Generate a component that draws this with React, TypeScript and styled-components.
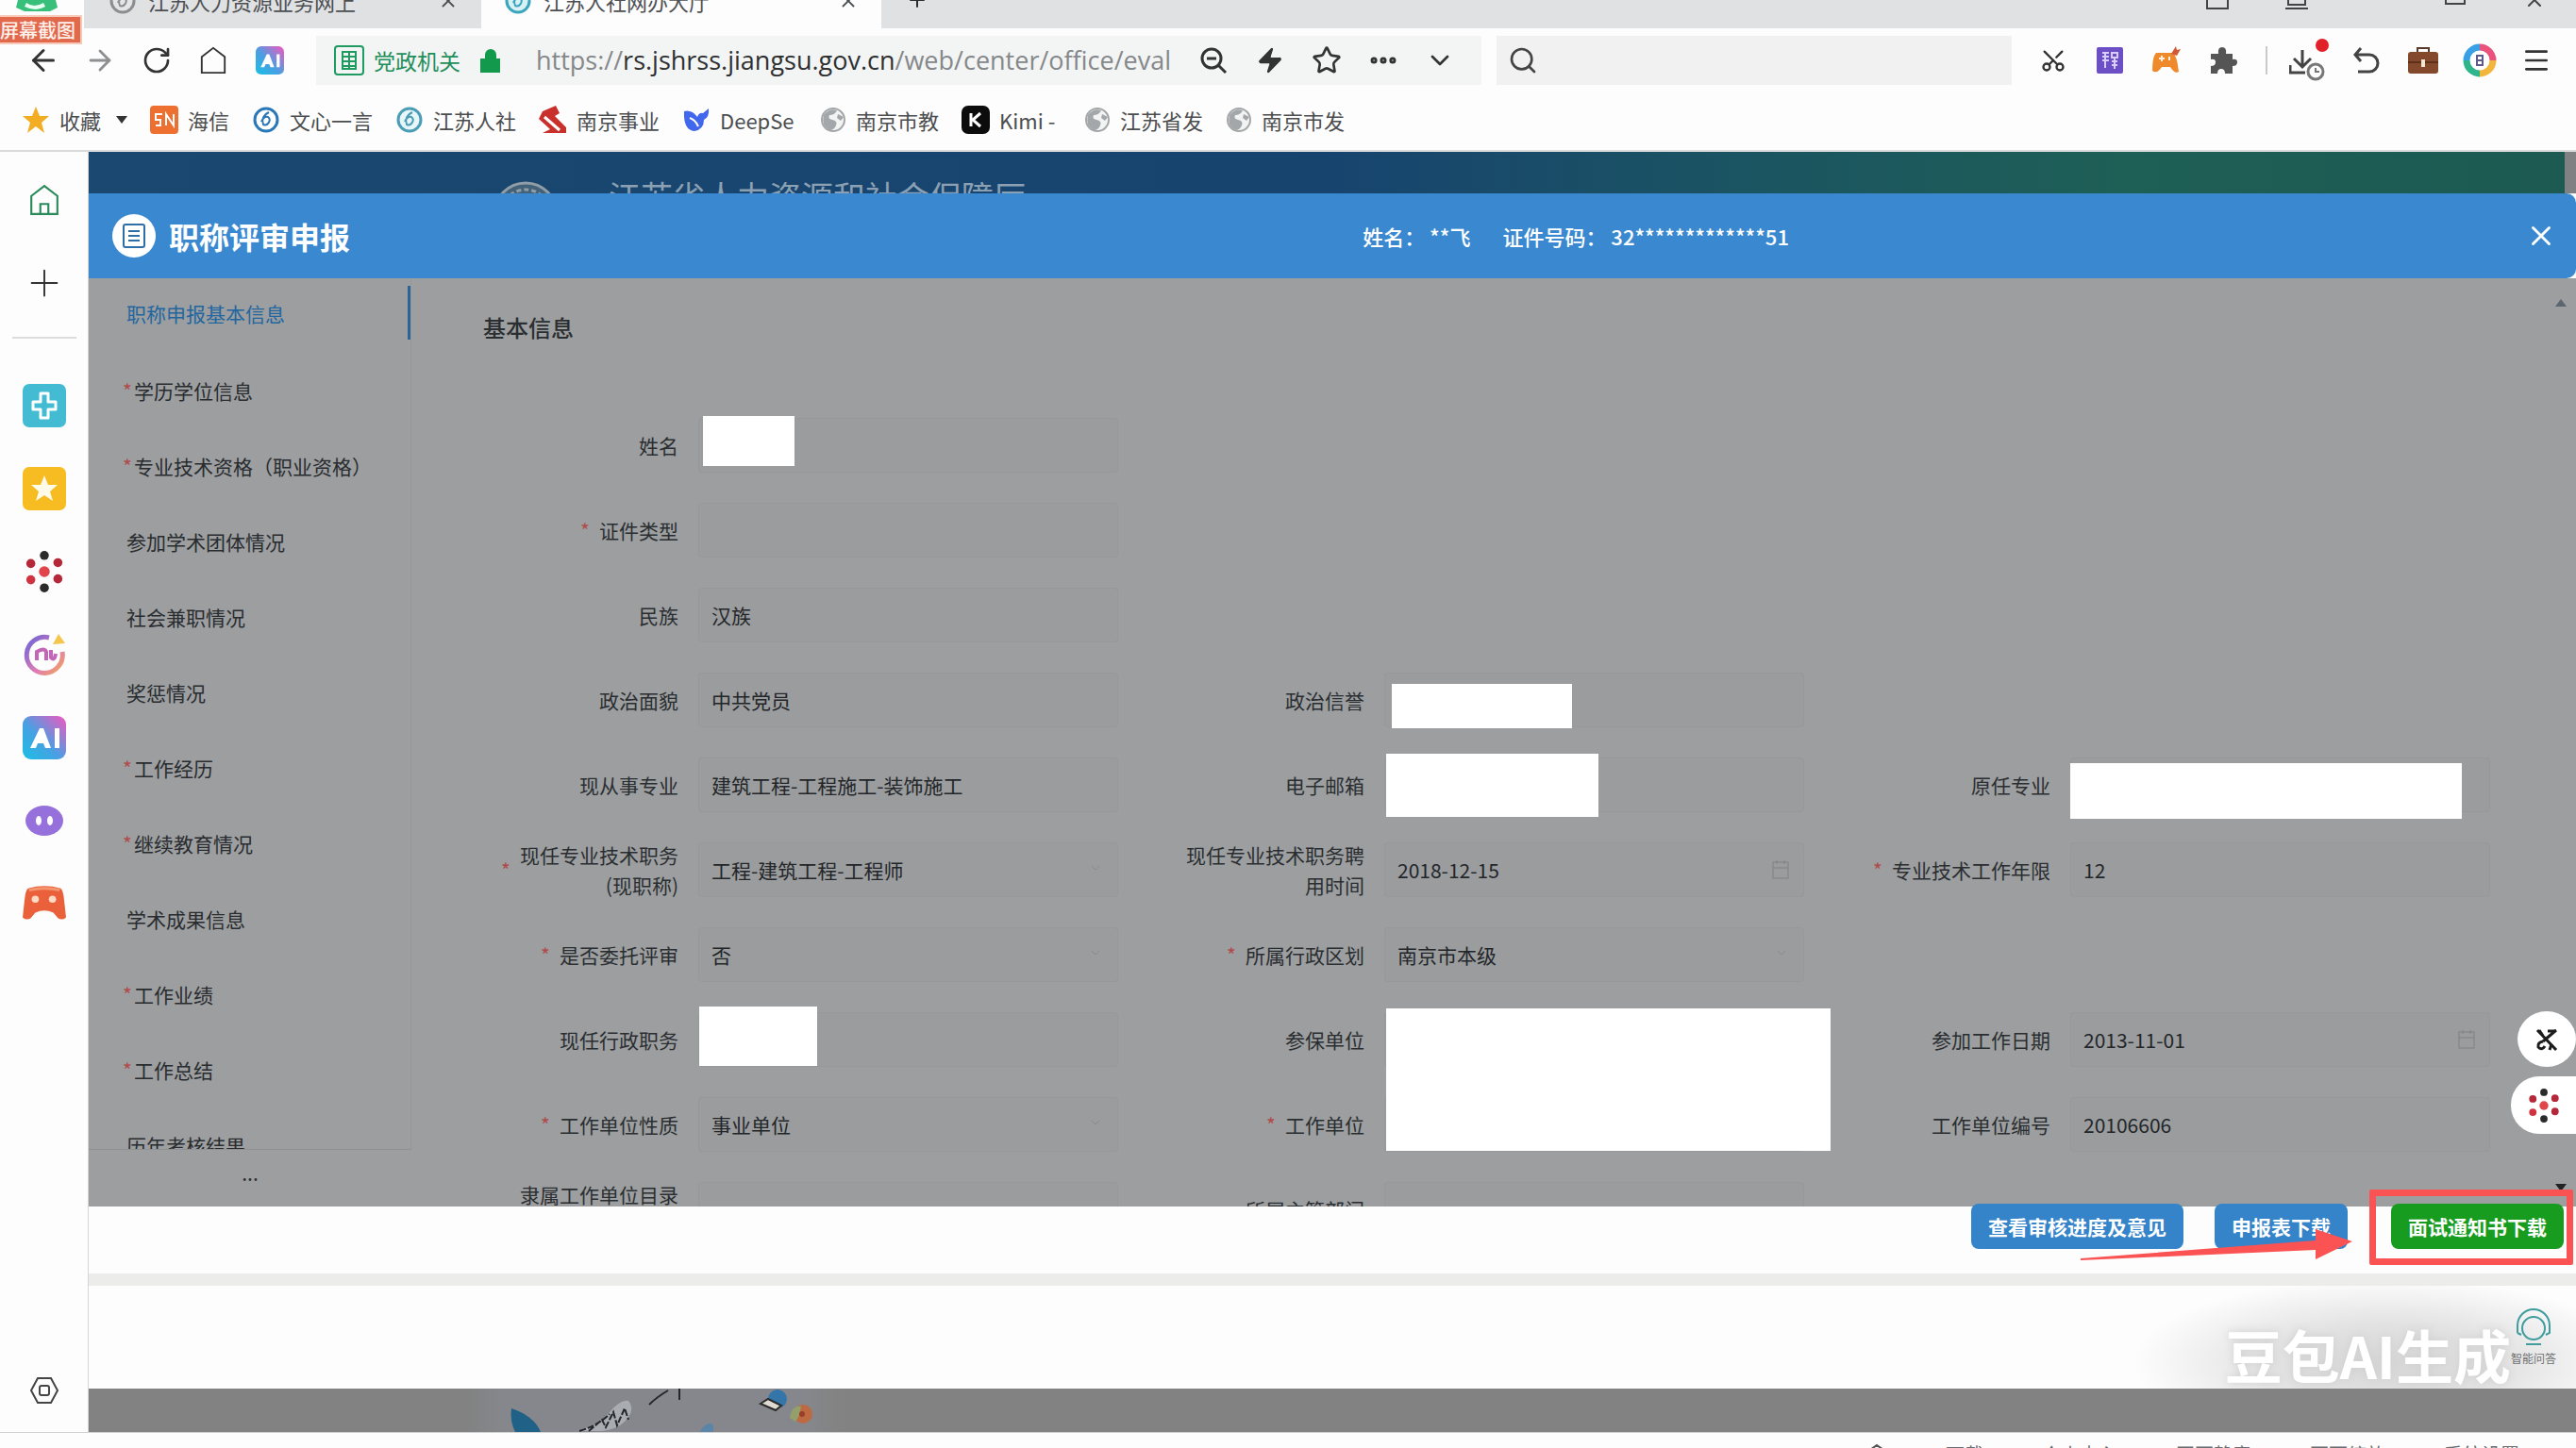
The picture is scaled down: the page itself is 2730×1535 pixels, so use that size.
import React from 'react';
import styled, { createGlobalStyle, css } from 'styled-components';
import {
  ArrowLeft, ArrowRight, RotateCw, Search, Zap, Star, Ellipsis, ChevronDown, Scissors, Menu, X, Plus,
} from 'lucide-react';

const GlobalStyle = createGlobalStyle`
  * { box-sizing: border-box; }
  body {
    margin: 0;
    font-family: "Noto Sans CJK SC", "Open Sans", sans-serif;
    color: #2b2e31;
    background: #fdfdfd;
  }
  button, input, select { font: inherit; color: inherit; }
  button { border: 0; padding: 0; background: none; cursor: pointer; }
  svg { display: block; flex: none; }
`;

/* ---------- browser window ---------- */

const Shell = styled.div`
  display: flex;
  flex-direction: column;
  height: 100vh;
  overflow: hidden;
`;

const TabStrip = styled.div`
  position: relative;
  display: flex;
  align-items: flex-end;
  height: 30px;
  background: #dfe1e3;
  overflow: hidden;
  flex: none;
`;

const BrandCorner = styled.div`
  width: 89px;
  height: 30px;
  background: #fdfdfd;
`;

const Tab = styled.div<{ $active?: boolean; $width: number }>`
  display: flex;
  align-items: center;
  gap: 12px;
  width: ${(p) => p.$width}px;
  height: 58px;
  flex: none;
  padding: 0 24px 0 ${(p) => (p.$active ? 24 : 26)}px;
  font-size: 22px;
  white-space: nowrap;
  color: #4c4f52;
  background: ${(p) => (p.$active ? '#fdfdfd' : 'transparent')};
  button { margin-left: auto; }
`;

const NewTab = styled.button`
  height: 60px;
  margin-left: 26px;
`;

const WindowControls = styled.div`
  display: flex;
  align-items: center;
  gap: 60px;
  height: 60px;
  margin-left: auto;
  padding-right: 32px;
`;

const CornerLogo = styled.div`
  position: absolute;
  left: 14px;
  top: 0;
  z-index: 2;
`;

const CornerLabel = styled.div`
  position: absolute;
  left: 0;
  top: 16px;
  z-index: 3;
  width: 87px;
  height: 31px;
  line-height: 28px;
  border: 2px solid #f6c9b8;
  border-left: 0;
  font-size: 20px;
  font-weight: 500;
  white-space: nowrap;
  color: #fdf1ec;
  background: #e2694c;
`;

const Toolbar = styled.div`
  display: flex;
  align-items: center;
  height: 68px;
  padding: 0 12px 0 16px;
  background: #fdfdfd;
  flex: none;
`;

const ToolButton = styled.button`
  display: flex;
  align-items: center;
  justify-content: center;
  width: 60px;
  height: 52px;
  flex: none;
  color: #333;
`;

const AddressBar = styled.div`
  display: flex;
  align-items: center;
  flex: 1233 1 0;
  height: 52px;
  min-width: 0;
  margin-left: 19px;
  padding: 0 14px 0 19px;
  background: #f3f4f4;
`;

const SiteBadge = styled.span`
  display: flex;
  align-items: center;
  gap: 10px;
  font-size: 23px;
  color: #1f8f5b;
  white-space: nowrap;
  svg:last-child { margin-left: 10px; }
`;

const Url = styled.div`
  flex: 1;
  min-width: 0;
  overflow: hidden;
  margin-left: 36px;
  font-family: "Open Sans", sans-serif;
  font-size: 27px;
  line-height: 40px;
  white-space: nowrap;
  color: #85888a;
  b { font-weight: 400; color: #2e3032; }
`;

const SearchBar = styled.label`
  display: flex;
  align-items: center;
  flex: 548 1 0;
  height: 52px;
  min-width: 0;
  margin: 0 14px 0 16px;
  padding-left: 12px;
  background: #f1f1f1;
  input { flex: 1; min-width: 0; border: 0; background: none; outline: 0; }
`;

const Separator = styled.span`
  width: 2px;
  height: 30px;
  margin: 0 15px;
  background: #c9c9c9;
`;

const Bookmarks = styled.nav`
  display: flex;
  align-items: center;
  gap: 24px;
  height: 63px;
  padding: 0 0 3px 23px;
  border-bottom: 2px solid #d9dadb;
  background: #fdfdfd;
  flex: none;
`;

const Bookmark = styled.a<{ $text?: number }>`
  display: flex;
  align-items: center;
  gap: 10px;
  font-size: 22px;
  line-height: 32px;
  color: #4b4d4f;
  text-decoration: none;
  span {
    min-width: ${(p) => (p.$text ? `${p.$text}px` : 'auto')};
    white-space: nowrap;
  }
`;

const Window = styled.div`
  display: flex;
  flex: 1;
  min-height: 0;
`;

const Rail = styled.aside`
  display: flex;
  flex-direction: column;
  align-items: center;
  width: 94px;
  padding-top: 7px;
  border-right: 1px solid #d5d6d7;
  background: #fdfdfd;
  flex: none;
  hr {
    width: 68px;
    height: 2px;
    margin: 13px 0 27px;
    border: 0;
    background: #dcdcdc;
    flex: none;
  }
`;

const RailButton = styled.button<{ $last?: boolean }>`
  display: flex;
  align-items: center;
  justify-content: center;
  width: 100%;
  height: 88px;
  ${(p) => p.$last && css`margin-top: auto;`}
`;

const StatusBar = styled.footer`
  display: flex;
  justify-content: flex-end;
  gap: 62px;
  height: 17px;
  padding: 12px 60px 0 0;
  overflow: hidden;
  font-size: 20px;
  line-height: 22px;
  color: #6b6e70;
  border-top: 1px solid #cfd0d0;
  background: #fdfdfd;
  flex: none;
`;

/* ---------- page ---------- */

const Page = styled.main`
  position: relative;
  display: flex;
  flex-direction: column;
  flex: 1;
  min-width: 0;
`;

const Banner = styled.div`
  display: flex;
  align-items: flex-start;
  gap: 53px;
  height: 44px;
  padding: 28px 0 0 428px;
  overflow: hidden;
  border-right: 12px solid #7f8182;
  background: linear-gradient(90deg, #1a4870 0%, #17446f 50%, #1b5561 68%, #1e5f56 82%, #1c5a52 100%);
  flex: none;
`;

const BannerTitle = styled.div`
  font-family: "Liberation Serif", "Noto Sans CJK SC", serif;
  font-size: 34px;
  line-height: 44px;
  white-space: nowrap;
  color: #8ba0b3;
`;

const DialogHeader = styled.header`
  display: grid;
  grid-template-columns: 21fr 20fr;
  align-items: center;
  height: 90px;
  color: #fff;
  background: #3a89d0;
  border-radius: 0 10px 10px 0;
  flex: none;
`;

const DialogTitle = styled.h1`
  display: flex;
  align-items: center;
  gap: 14px;
  margin: 0;
  padding-left: 25px;
  font-size: 32px;
  line-height: 44px;
  font-weight: 700;
`;

const Applicant = styled.div`
  display: flex;
  align-items: center;
  gap: 34px;
  padding-right: 20px;
  font-size: 22px;
  font-weight: 500;
  button { margin-left: auto; color: #fff; }
`;

const DialogBody = styled.div`
  position: relative;
  display: flex;
  flex: 1;
  min-height: 0;
  background: #9c9ea0;
`;

const SideNav = styled.nav`
  display: flex;
  flex-direction: column;
  width: 342px;
  flex: none;
`;

const NavList = styled.ul`
  flex: 1;
  min-height: 0;
  margin: 0;
  padding: 8px 0 0;
  overflow: hidden;
  list-style: none;
  border-right: 1px solid #96989a;
  border-bottom: 1px solid #8f9193;
`;

const NavItem = styled.li<{ $current?: boolean }>`
  display: flex;
  align-items: center;
  height: ${(p) => (p.$current ? 57 : 80)}px;
  margin-bottom: ${(p) => (p.$current ? 14 : 0)}px;
  border-right: ${(p) => (p.$current ? '3px solid #2b6496' : '0')};
  color: ${(p) => (p.$current ? '#23669f' : '#292c2f')};
  font-size: 21px;
  a { display: flex; color: inherit; text-decoration: none; white-space: nowrap; }
`;

const Mark = styled.i<{ $nav?: boolean }>`
  width: ${(p) => (p.$nav ? 12 : 20)}px;
  font-style: normal;
  text-align: left;
  color: #b04a4a;
`;

const NavLabel = styled.a<{ $required?: boolean }>`
  padding-left: ${(p) => (p.$required ? 36 : 40)}px;
`;

const NavMore = styled.button`
  height: 60px;
  padding-bottom: 12px;
  font-size: 21px;
`;

const FormPane = styled.form`
  flex: 1;
  min-width: 0;
  overflow: hidden;
  padding: 34px 5px 0 76px;
`;

const SectionTitle = styled.h2`
  margin: 0 0 62px;
  font-size: 24px;
  line-height: 36px;
  font-weight: 500;
`;

const FormRow = styled.div`
  display: grid;
  grid-template-columns: repeat(3, 1fr);
  height: 90px;
`;

const Field = styled.div`
  display: flex;
  align-items: center;
  gap: 21px;
  padding-right: 54px;
`;

const FieldLabel = styled.label`
  display: flex;
  align-items: center;
  justify-content: flex-end;
  width: 207px;
  flex: none;
  font-size: 21px;
  line-height: 32px;
  text-align: right;
  white-space: pre;
`;

const Control = styled.div`
  position: relative;
  flex: 1;
  min-width: 0;
  height: 58px;
`;

const boxStyle = css`
  display: block;
  width: 100%;
  height: 100%;
  padding: 0 13px;
  border: 1px solid #96989a;
  border-radius: 4px;
  outline: 0;
  font-size: 21px;
  color: #232629;
  background: #9a9c9e;
  opacity: 1;
`;

const TextBox = styled.input`${boxStyle}`;

const SelectBox = styled.select`
  ${boxStyle}
  appearance: none;
`;

const ControlIcon = styled.span`
  position: absolute;
  right: 16px;
  top: 19px;
  color: #7f8284;
`;

const Cover = styled.span<{ $x: number; $y: number; $w: number; $h: number }>`
  position: absolute;
  z-index: 1;
  left: ${(p) => p.$x}px;
  top: ${(p) => p.$y}px;
  width: ${(p) => p.$w}px;
  height: ${(p) => p.$h}px;
  background: #fff;
`;

const ScrollTrack = styled.div`
  display: flex;
  flex-direction: column;
  justify-content: space-between;
  align-items: center;
  width: 32px;
  padding: 22px 0 16px;
  flex: none;
`;

const FloatingTools = styled.div`
  position: absolute;
  right: 0;
  bottom: 77px;
  z-index: 2;
  display: flex;
  flex-direction: column;
  align-items: flex-end;
  gap: 10px;
`;

const FloatButton = styled.button<{ $pill?: boolean }>`
  display: flex;
  align-items: center;
  justify-content: center;
  width: ${(p) => (p.$pill ? 69 : 62)}px;
  height: ${(p) => (p.$pill ? 61 : 59)}px;
  border-radius: ${(p) => (p.$pill ? '30px 0 0 30px' : '50%')};
  background: #fff;
`;

const Actions = styled.div`
  position: relative;
  z-index: 3;
  display: flex;
  justify-content: flex-end;
  align-items: flex-start;
  gap: 33px;
  height: 71px;
  padding-right: 13px;
  background: #fdfdfd;
  flex: none;
`;

const ActionButton = styled.button<{ $green?: boolean }>`
  height: 48px;
  margin-top: -3px;
  padding: 0 18px;
  border-radius: 8px;
  font-size: 21px;
  font-weight: 700;
  white-space: nowrap;
  color: #fff;
  background: ${(p) => (p.$green ? '#189c20' : '#3583c8')};
`;

const Highlighted = styled.div`
  position: relative;
  margin-left: 13px;
  &::after {
    content: '';
    position: absolute;
    inset: -18px -10px -17px -23px;
    border: 7px solid #fb5353;
    border-radius: 2px;
    pointer-events: none;
  }
`;

const Pointer = styled.svg`
  position: absolute;
  right: 237px;
  top: 24px;
  pointer-events: none;
`;

const Divider = styled.div`
  height: 13px;
  background: #ececea;
  flex: none;
`;

const LowerPanel = styled.div`
  display: flex;
  justify-content: flex-end;
  align-items: flex-end;
  height: 109px;
  padding-right: 21px;
  background: radial-gradient(ellipse 270px 90px at calc(100% - 200px) 75%, #d6d6d6 0%, #e2e2e2 45%, #fdfdfd 100%);
  flex: none;
`;

const Watermark = styled.div`
  font-size: 61px;
  line-height: 72px;
  font-weight: 700;
  white-space: nowrap;
  color: #fff;
  text-shadow: 0 0 10px #cfcfcf;
`;

const Helper = styled.button`
  display: flex;
  flex-direction: column;
  align-items: center;
  align-self: flex-start;
  gap: 4px;
  padding-top: 24px;
  font-size: 12px;
  line-height: 18px;
  color: #6d7072;
`;

const Backdrop = styled.div`
  height: 46px;
  padding-left: 400px;
  overflow: hidden;
  background: linear-gradient(90deg, #828282 0, #828282 400px, #86878c 440px, #86878c 760px, #828282 800px);
  flex: none;
`;

/* ---------- drawings ---------- */

const AiTile = ({ size }: { size: number }) => (
  <svg width={size} height={size} viewBox="0 0 46 46">
    <defs>
      <linearGradient id={`ai${size}`} x1="0" y1="1" x2="1" y2="0">
        <stop offset="0" stopColor="#18c0e4" />
        <stop offset=".45" stopColor="#4a9fe2" />
        <stop offset="1" stopColor="#f457c0" />
      </linearGradient>
    </defs>
    <rect width="46" height="46" rx="9" fill={`url(#ai${size})`} />
    <path d="M8 34 18 13h4l8 21h-6l-2-5h-6l-2 5zM34 13h5v21h-5z" fill="#fff" />
  </svg>
);

const HomeIcon = ({ color, size }: { color: string; size: number }) => (
  <svg width={size} height={size} viewBox="0 0 32 32" fill="none" stroke={color} strokeWidth="2">
    <path d="M3 12 16 2l13 10v18H3z" />
    {size > 30 && <path d="M12 30V20h8v10" />}
  </svg>
);

const Globe = () => (
  <svg width="28" height="28" viewBox="0 0 28 28">
    <circle cx="14" cy="14" r="12" fill="#f2f3f3" stroke="#a4a7a9" strokeWidth="2" />
    <path d="M4 9q6-8 14-5-2 5-8 5-2 4 3 5 6 1 4 6-2 5-7 5Q1 20 4 9z" fill="#a4a7a9" />
    <path d="m19 8 6 3-3 4-4-3z" fill="#a4a7a9" />
  </svg>
);

const Swirl = ({ color, fill }: { color: string; fill: string }) => (
  <svg width="30" height="30" viewBox="0 0 30 30" fill="none" stroke={color} strokeWidth="3">
    <circle cx="15" cy="15" r="12" fill={fill} />
    <path d="M18 7c-6 3-8 8-6 13 5 2 9-5 5-8-3-1-6 2-7 5" strokeWidth="2" />
  </svg>
);

const Dots = ({ size }: { size: number }) => (
  <svg width={size} height={size} viewBox="0 0 46 46">
    <circle cx="23" cy="5" r="5" fill="#2b2b2b" />
    <circle cx="23" cy="41" r="5" fill="#2b2b2b" />
    <circle cx="8" cy="14" r="5" fill="#b5283a" />
    <circle cx="38" cy="13" r="5" fill="#b5283a" />
    <circle cx="8" cy="32" r="5" fill="#cf3340" />
    <circle cx="38" cy="31" r="5" fill="#b5283a" />
    <circle cx="23" cy="23" r="6" fill="#e2444b" />
  </svg>
);

const Pad = ({ color, size }: { color: string; size: number }) => (
  <svg width={size} height={size} viewBox="0 0 48 48">
    <path d="M6 7q18-5 36 0 3 2 4 14l2 18q-4 4-9 1l-5-6q-10-5-20 0l-5 6q-5 3-9-1l2-18Q3 9 6 7z" fill={color} />
    <path d="M7 9q17-4 34 0" stroke="#f4956f" strokeWidth="3" fill="none" />
    <circle cx="14" cy="19" r="4" fill="#ffd9c4" />
    <circle cx="33" cy="19" r="4" fill="#ffd9c4" />
  </svg>
);

const CalendarIcon = () => (
  <svg width="18" height="20" viewBox="0 0 18 20" fill="none" stroke="currentColor" strokeWidth="1">
    <rect x="1" y="2" width="16" height="17" />
    <path d="M1 8h16M5 0v4M13 0v4" />
  </svg>
);

/* ---------- data ---------- */

const navItems: { text: string; required?: boolean }[] = [
  { text: '职称申报基本信息' },
  { text: '学历学位信息', required: true },
  { text: '专业技术资格（职业资格）', required: true },
  { text: '参加学术团体情况' },
  { text: '社会兼职情况' },
  { text: '奖惩情况' },
  { text: '工作经历', required: true },
  { text: '继续教育情况', required: true },
  { text: '学术成果信息' },
  { text: '工作业绩', required: true },
  { text: '工作总结', required: true },
  { text: '历年考核结果' },
];

type FieldData = {
  label: string;
  required?: boolean;
  value?: string;
  kind?: 'select' | 'date';
  cover?: [number, number, number, number];
};

const rows: (FieldData | null)[][] = [
  [{ label: '姓名', cover: [5, -2, 97, 53] }],
  [{ label: '证件类型', required: true }],
  [{ label: '民族', value: '汉族' }],
  [{ label: '政治面貌', value: '中共党员' }, { label: '政治信誉', cover: [8, 12, 191, 47] }],
  [
    { label: '现从事专业', value: '建筑工程-工程施工-装饰施工' },
    { label: '电子邮箱', cover: [2, -4, 225, 67] },
    { label: '原任专业', cover: [0, 6, 415, 59] },
  ],
  [
    { label: '现任专业技术职务\n(现职称)', required: true, value: '工程-建筑工程-工程师', kind: 'select' },
    { label: '现任专业技术职务聘\n用时间', value: '2018-12-15', kind: 'date' },
    { label: '专业技术工作年限', required: true, value: '12' },
  ],
  [
    { label: '是否委托评审', required: true, value: '否', kind: 'select' },
    { label: '所属行政区划', required: true, value: '南京市本级', kind: 'select' },
  ],
  [
    { label: '现任行政职务', cover: [1, -6, 125, 63] },
    { label: '参保单位', cover: [2, -4, 471, 151] },
    { label: '参加工作日期', value: '2013-11-01', kind: 'date' },
  ],
  [
    { label: '工作单位性质', required: true, value: '事业单位', kind: 'select' },
    { label: '工作单位', required: true },
    { label: '工作单位编号', value: '20106606' },
  ],
  [{ label: '隶属工作单位目录\n名称' }, { label: '所属主管部门' }],
];

const FormField = ({ data, id }: { data: FieldData; id: string }) => (
  <Field>
    <FieldLabel htmlFor={id}>
      {data.required && <Mark>*</Mark>}
      <span>{data.label}</span>
    </FieldLabel>
    <Control>
      {data.kind === 'select' ? (
        <SelectBox id={id} defaultValue={data.value}>
          <option>{data.value}</option>
        </SelectBox>
      ) : (
        <TextBox id={id} readOnly defaultValue={data.value ?? ''} />
      )}
      {data.kind === 'date' && <ControlIcon><CalendarIcon /></ControlIcon>}
      {data.kind === 'select' && <ControlIcon><ChevronDown size={16} strokeWidth={1} /></ControlIcon>}
      {data.cover && <Cover $x={data.cover[0]} $y={data.cover[1]} $w={data.cover[2]} $h={data.cover[3]} />}
    </Control>
  </Field>
);

export default function App() {
  return (
    <>
      <GlobalStyle />
      <Shell>
        <TabStrip>
          <BrandCorner />
          <Tab $width={421}>
            <Swirl color="#8b8e90" fill="#e4e5e6" />
            <span>江苏人力资源业务网上</span>
            <button aria-label="关闭标签页"><X size={22} strokeWidth={2} /></button>
          </Tab>
          <Tab $active $width={424}>
            <Swirl color="#3aa6bd" fill="#d9f1f5" />
            <span>江苏人社网办大厅</span>
            <button aria-label="关闭标签页"><X size={22} strokeWidth={2} /></button>
          </Tab>
          <NewTab aria-label="新标签页"><Plus size={24} strokeWidth={2} /></NewTab>
          <WindowControls>
            <svg width="24" height="24" viewBox="0 0 24 24" fill="none" stroke="#444" strokeWidth="2"><path d="M1 1h22v20H1z" /></svg>
            <svg width="24" height="24" viewBox="0 0 24 24" fill="none" stroke="#444" strokeWidth="2"><path d="M3 1h18v16H3zM0 21h24" /></svg>
            <svg width="24" height="24" viewBox="0 0 24 24" fill="none" stroke="#444" strokeWidth="2"><path d="M0 10h24" /></svg>
            <svg width="24" height="24" viewBox="0 0 24 24" fill="none" stroke="#444" strokeWidth="2"><path d="M2 2h20v14H2z" /></svg>
            <X size={24} color="#444" />
          </WindowControls>
        </TabStrip>
        <CornerLogo>
          <svg width="50" height="14" viewBox="0 0 50 14">
            <path d="M5 0h40l2 8-8 4H12L3 8z" fill="#38c07a" />
            <path d="M14 3q8 6 18 0l2 4q-10 6-22 0z" fill="#e9fff2" />
          </svg>
        </CornerLogo>
        <CornerLabel>屏幕截图</CornerLabel>

        <Toolbar>
          <ToolButton aria-label="后退"><ArrowLeft size={36} strokeWidth={2} /></ToolButton>
          <ToolButton aria-label="前进"><ArrowRight size={34} strokeWidth={2} color="#8d8f91" /></ToolButton>
          <ToolButton aria-label="刷新"><RotateCw size={32} strokeWidth={2} /></ToolButton>
          <ToolButton aria-label="主页"><HomeIcon color="#333" size={30} /></ToolButton>
          <ToolButton aria-label="AI 助手"><AiTile size={30} /></ToolButton>
          <AddressBar>
            <SiteBadge>
              <svg width="32" height="32" viewBox="0 0 32 32" fill="none" stroke="#1f9a60" strokeWidth="2">
                <rect x="1" y="1" width="30" height="30" rx="3" />
                <path d="M9 7h14v18H9zM9 12h14M9 17h14M9 22h14M16 7v18" />
              </svg>
              党政机关
              <svg width="24" height="28" viewBox="0 0 24 28">
                <path d="M1 12h21v15H1zM6 12V8a6 6 0 0 1 12 0v4" fill="#12994b" />
              </svg>
            </SiteBadge>
            <Url>https://<b>rs.jshrss.jiangsu.gov.cn</b>/web/center/office/eval</Url>
            <ToolButton aria-label="缩小">
              <svg width="32" height="32" viewBox="0 0 32 32" fill="none" stroke="#333" strokeWidth="3">
                <circle cx="14" cy="14" r="10" /><path d="m21 21 8 8M9 14h10" />
              </svg>
            </ToolButton>
            <ToolButton aria-label="极速模式"><Zap size={30} fill="#333" strokeWidth={1} /></ToolButton>
            <ToolButton aria-label="收藏"><Star size={32} strokeWidth={2} /></ToolButton>
            <ToolButton aria-label="更多"><Ellipsis size={34} strokeWidth={3} /></ToolButton>
            <ToolButton aria-label="展开"><ChevronDown size={32} strokeWidth={2} /></ToolButton>
          </AddressBar>
          <SearchBar>
            <Search size={32} strokeWidth={2} color="#444" />
            <input aria-label="搜索" />
          </SearchBar>
          <ToolButton aria-label="截图"><Scissors size={28} strokeWidth={2} style={{ rotate: '-90deg' }} /></ToolButton>
          <ToolButton aria-label="翻译">
            <svg width="28" height="28" viewBox="0 0 28 28">
              <rect width="28" height="28" rx="2" fill="#6c4fc4" />
              <path d="M6 6h7M6 10h7M6 14h7M9 6v16M16 6h6v5h-6zM16 15h6M16 19h6M19 12v11" stroke="#d8cdf8" strokeWidth="2" fill="none" />
            </svg>
          </ToolButton>
          <ToolButton aria-label="游戏">
            <svg width="34" height="32" viewBox="0 0 34 32">
              <path d="M6 8h18q4 3 6 20-4 3-9-5h-9q-5 8-10 4Q2 12 6 8z" fill="#ee8a2c" />
              <path d="m22 9 5-8 1 4 4-1-4 7z" fill="#d05a34" />
              <path d="M9 14h6M12 11v6M20 12v4" stroke="#fff0dd" strokeWidth="2" />
            </svg>
          </ToolButton>
          <ToolButton aria-label="扩展">
            <svg width="32" height="30" viewBox="0 0 32 30">
              <path d="M3 8h8q-1-7 4-7t4 7h7v6q5-1 5 3t-5 4v8h-8q0-5-4-5t-4 5H3v-8q5 0 5-4t-5-3z" fill="#555" />
            </svg>
          </ToolButton>
          <Separator />
          <ToolButton aria-label="下载">
            <svg width="44" height="46" viewBox="0 0 44 46" fill="none" stroke="#444" strokeWidth="3">
              <path d="M14 12v18M5 21l9 9 9-9M1 28v8h16" />
              <circle cx="28" cy="35" r="8" stroke="#777" /><path d="M28 31v4h4" stroke="#777" strokeWidth="2" />
              <circle cx="35" cy="7" r="7" fill="#e02228" stroke="none" />
            </svg>
          </ToolButton>
          <ToolButton aria-label="恢复">
            <svg width="30" height="30" viewBox="0 0 30 30" fill="none" stroke="#444" strokeWidth="3">
              <path d="M9 2 3 9l6 7M3 9h15a9 9 0 0 1 0 18H6" />
            </svg>
          </ToolButton>
          <ToolButton aria-label="工具箱">
            <svg width="34" height="30" viewBox="0 0 34 30">
              <path d="M11 7V2h12v5" fill="none" stroke="#5a3a29" strokeWidth="2" />
              <rect x="1" y="6" width="32" height="23" rx="3" fill="#84492c" />
              <path d="M1 17h32" stroke="#5d301c" strokeWidth="2" /><rect x="15" y="14" width="4" height="8" fill="#f3e3cf" />
            </svg>
          </ToolButton>
          <ToolButton aria-label="账号">
            <svg width="36" height="36" viewBox="0 0 36 36" fill="none" strokeWidth="7">
              <path d="M18 4a14 14 0 0 1 14 14" stroke="#e8527c" />
              <path d="M32 18a14 14 0 0 1-14 14" stroke="#f2b63c" />
              <path d="M18 32A14 14 0 0 1 4 18" stroke="#2fb58a" />
              <path d="M4 18A14 14 0 0 1 18 4" stroke="#3aa0e6" />
              <circle cx="18" cy="18" r="10" fill="#fff" stroke="none" />
              <path d="M14 13h8M14 18h8M14 23h8M15 13v10M21 13v10" stroke="#5c5a8c" strokeWidth="2" />
            </svg>
          </ToolButton>
          <ToolButton aria-label="菜单"><Menu size={32} strokeWidth={2} /></ToolButton>
        </Toolbar>

        <Bookmarks>
          <Bookmark href="#">
            <svg width="30" height="30" viewBox="0 0 30 30"><path d="m15 1 4 10h10l-8 7 3 11-9-7-9 7 3-11-8-7h10z" fill="#f3ad22" /></svg>
            <span>收藏</span>
            <svg width="18" height="10" viewBox="0 0 18 10"><path d="M6 1h12l-6 8z" fill="#333" /></svg>
          </Bookmark>
          <Bookmark href="#">
            <svg width="30" height="30" viewBox="0 0 30 30"><rect width="30" height="30" rx="4" fill="#ee7030" /><path d="M13 9H6v6h5v6H6M17 21V9l8 12V9" stroke="#fff" strokeWidth="2" fill="none" /></svg>
            <span>海信</span>
          </Bookmark>
          <Bookmark href="#"><Swirl color="#2a78b8" fill="#fff" /><span>文心一言</span></Bookmark>
          <Bookmark href="#"><Swirl color="#4a9db4" fill="#e6f6fa" /><span>江苏人社</span></Bookmark>
          <Bookmark href="#">
            <svg width="30" height="30" viewBox="0 0 30 30"><path d="M4 6 18 0l4 8-5 3 12 12v6H4l8-4L0 14z" fill="#c9302c" /><path d="m6 12 16 14" stroke="#fff" strokeWidth="3" /></svg>
            <span>南京事业</span>
          </Bookmark>
          <Bookmark href="#" $text={82}>
            <svg width="30" height="30" viewBox="0 0 30 30"><path d="M2 6q8-2 14 6 2-5 6-4l6-5q1 9-5 12 0 10-10 12Q1 26 2 6z" fill="#4167ec" /><path d="M8 13q6 2 9 9" stroke="#fff" strokeWidth="2" fill="none" /></svg>
            <span>DeepSe</span>
          </Bookmark>
          <Bookmark href="#"><Globe /><span>南京市教</span></Bookmark>
          <Bookmark href="#" $text={66}>
            <svg width="30" height="30" viewBox="0 0 30 30"><rect width="30" height="30" rx="7" fill="#0c0c0c" /><path d="M10 8v14M20 8l-8 7 8 7" stroke="#fff" strokeWidth="3" fill="none" /></svg>
            <span>Kimi -</span>
          </Bookmark>
          <Bookmark href="#"><Globe /><span>江苏省发</span></Bookmark>
          <Bookmark href="#"><Globe /><span>南京市发</span></Bookmark>
        </Bookmarks>

        <Window>
          <Rail>
            <RailButton aria-label="主页"><HomeIcon color="#2a8a5a" size={34} /></RailButton>
            <RailButton aria-label="添加"><Plus size={46} strokeWidth={1} color="#333" /></RailButton>
            <hr />
            <RailButton aria-label="健康">
              <svg width="46" height="46" viewBox="0 0 46 46"><rect width="46" height="46" rx="7" fill="#43bcd3" /><path d="M19 10h8v9h8v8h-8v9h-8v-9h-8v-8h8z" fill="none" stroke="#fff" strokeWidth="3" strokeLinejoin="round" /></svg>
            </RailButton>
            <RailButton aria-label="收藏">
              <svg width="46" height="46" viewBox="0 0 46 46"><rect width="46" height="46" rx="7" fill="#f6bc21" /><path d="m23 9 4 10h10l-8 7 3 10-9-6-9 6 3-10-8-7h10z" fill="#fffbe9" /></svg>
            </RailButton>
            <RailButton aria-label="应用"><Dots size={44} /></RailButton>
            <RailButton aria-label="创作">
              <svg width="46" height="46" viewBox="0 0 46 46" fill="none">
                <path d="M28 5A19 19 0 1 0 42 20" stroke="url(#ring)" strokeWidth="5" />
                <defs><linearGradient id="ring" x1="0" y1="0" x2="1" y2="1"><stop offset="0" stopColor="#6a63d8" /><stop offset=".6" stopColor="#e07bb5" /><stop offset="1" stopColor="#f2a65a" /></linearGradient></defs>
                <path d="m32 12 6-11 7 10z" fill="#f5c54c" />
                <path d="M15 29V20q8-5 10 0v9M30 18v8q4 4 5-4" stroke="#c466b8" strokeWidth="4" />
              </svg>
            </RailButton>
            <RailButton aria-label="AI"><AiTile size={46} /></RailButton>
            <RailButton aria-label="机器人">
              <svg width="42" height="36" viewBox="0 0 42 36"><ellipse cx="21" cy="18" rx="20" ry="16" fill="#9671dc" /><ellipse cx="15" cy="18" rx="3" ry="5" fill="#fff" /><ellipse cx="27" cy="18" rx="3" ry="5" fill="#fff" /></svg>
            </RailButton>
            <RailButton aria-label="游戏"><Pad color="#e9603a" size={46} /></RailButton>
            <RailButton aria-label="设置" $last>
              <svg width="32" height="30" viewBox="0 0 32 30" fill="none" stroke="#444" strokeWidth="2"><path d="M9 2h14l7 13-7 13H9L2 15z" /><rect x="11" y="10" width="10" height="10" rx="2" /></svg>
            </RailButton>
          </Rail>

          <Page>
            <Banner>
              <svg width="70" height="70" viewBox="0 0 70 70" fill="none" stroke="#8f9da6" strokeWidth="3"><circle cx="35" cy="38" r="33" fill="#44617a" /><circle cx="35" cy="38" r="26" strokeDasharray="5 3" /></svg>
              <BannerTitle>江苏省人力资源和社会保障厅</BannerTitle>
            </Banner>
            <DialogHeader>
              <DialogTitle>
                <svg width="46" height="46" viewBox="0 0 46 46"><circle cx="23" cy="23" r="23" fill="#fff" /><path d="M12 13q0-2 2-2h18q2 0 2 2v20q0 2-2 2H14q-2 0-2-2zM17 18h12M17 23h12M17 28h12" stroke="#2f6fa8" strokeWidth="2" fill="none" /></svg>
                职称评审申报
              </DialogTitle>
              <Applicant>
                <span>姓名： **飞</span>
                <span>证件号码： 32*************51</span>
                <button aria-label="关闭"><X size={34} strokeWidth={2} /></button>
              </Applicant>
            </DialogHeader>

            <DialogBody>
              <SideNav>
                <NavList>
                  {navItems.map((item, i) => (
                    <NavItem key={item.text} $current={i === 0}>
                      <NavLabel href="#" $required={item.required}>
                        {item.required && <Mark $nav>*</Mark>}
                        {item.text}
                      </NavLabel>
                    </NavItem>
                  ))}
                </NavList>
                <NavMore type="button">...</NavMore>
              </SideNav>
              <FormPane>
                <SectionTitle>基本信息</SectionTitle>
                {rows.map((row, r) => (
                  <FormRow key={r}>
                    {row.map((cell, c) => cell && <FormField key={c} data={cell} id={`f${r}-${c}`} />)}
                  </FormRow>
                ))}
              </FormPane>
              <ScrollTrack>
                <svg width="12" height="8" viewBox="0 0 12 8"><path d="m0 8 6-8 6 8z" fill="#5b6570" /></svg>
                <svg width="12" height="8" viewBox="0 0 12 8"><path d="m0 0 6 8 6-8z" fill="#222" /></svg>
              </ScrollTrack>
              <FloatingTools>
                <FloatButton type="button" aria-label="截图">
                  <svg width="26" height="26" viewBox="0 0 26 26" fill="none" stroke="#1c1c1c" strokeWidth="3"><path d="m3 3 20 21M5 3l4 6M23 3 9 15M14 4h9" /><path d="M9 15q-6 1-5 6 4 4 7-1M18 18l-2 6" /></svg>
                </FloatButton>
                <FloatButton type="button" $pill aria-label="应用"><Dots size={36} /></FloatButton>
              </FloatingTools>
            </DialogBody>

            <Actions>
              <ActionButton>查看审核进度及意见</ActionButton>
              <ActionButton>申报表下载</ActionButton>
              <Highlighted><ActionButton $green>面试通知书下载</ActionButton></Highlighted>
              <Pointer width="288" height="34" viewBox="0 0 288 34"><path d="M0 31 249 12V0l39 13-39 19V22L0 33z" fill="#fb5353" /></Pointer>
            </Actions>
            <Divider />
            <LowerPanel>
              <Watermark>豆包AI生成</Watermark>
              <Helper>
                <svg width="38" height="40" viewBox="0 0 38 40" fill="none" stroke="#3f9d9d" strokeWidth="2"><path d="M2 26V18a17 17 0 0 1 34 0v8l-4 2M2 26l4 2" /><circle cx="19" cy="21" r="12" /><path d="M11 38h16" /></svg>
                智能问答
              </Helper>
            </LowerPanel>
            <Backdrop>
              <svg width="400" height="46" viewBox="0 0 400 46">
                <path d="M48 21q24 8 31 25H52q-6-12-4-25z" fill="#1f6187" />
                <path d="M118 45q24-8 34-20 12-14 20-12 8 10-4 22-8 8-24 10z" fill="#a9acb0" />
                <path d="M120 45q20-6 32-18M130 45l14-12 4 8 8-16 4 14 8-18 4 12" stroke="#23262a" strokeWidth="2" fill="none" strokeDasharray="7 2" />
                <path d="M194 17q8-8 20-15M226 0v12" stroke="#23262a" strokeWidth="2" fill="none" />
                <path d="M250 42q8-8 12-3v7h-14z" fill="#5c84a6" />
                <circle cx="330" cy="11" r="10" fill="#3576aa" />
                <path d="m312 16 8-5 14 7-6 5z" fill="#dedcd2" stroke="#2b2b2b" strokeWidth="2" />
                <circle cx="357" cy="27" r="10" fill="#bd6a42" /><path d="M343 31q2-14 12-12-2 12-6 16z" fill="#93a06c" />
                <circle cx="356" cy="27" r="3" fill="#9b3d2a" />
              </svg>
            </Backdrop>
          </Page>
        </Window>
        <StatusBar>
          <svg width="22" height="20" viewBox="0 0 22 20" fill="none" stroke="#555" strokeWidth="2"><path d="M1 8 11 1l10 7" /></svg>
          <span>下载</span>
          <span>个人中心</span>
          <span>网页静音</span>
          <span>页面缩放</span>
          <span>系统设置</span>
        </StatusBar>
      </Shell>
    </>
  );
}
